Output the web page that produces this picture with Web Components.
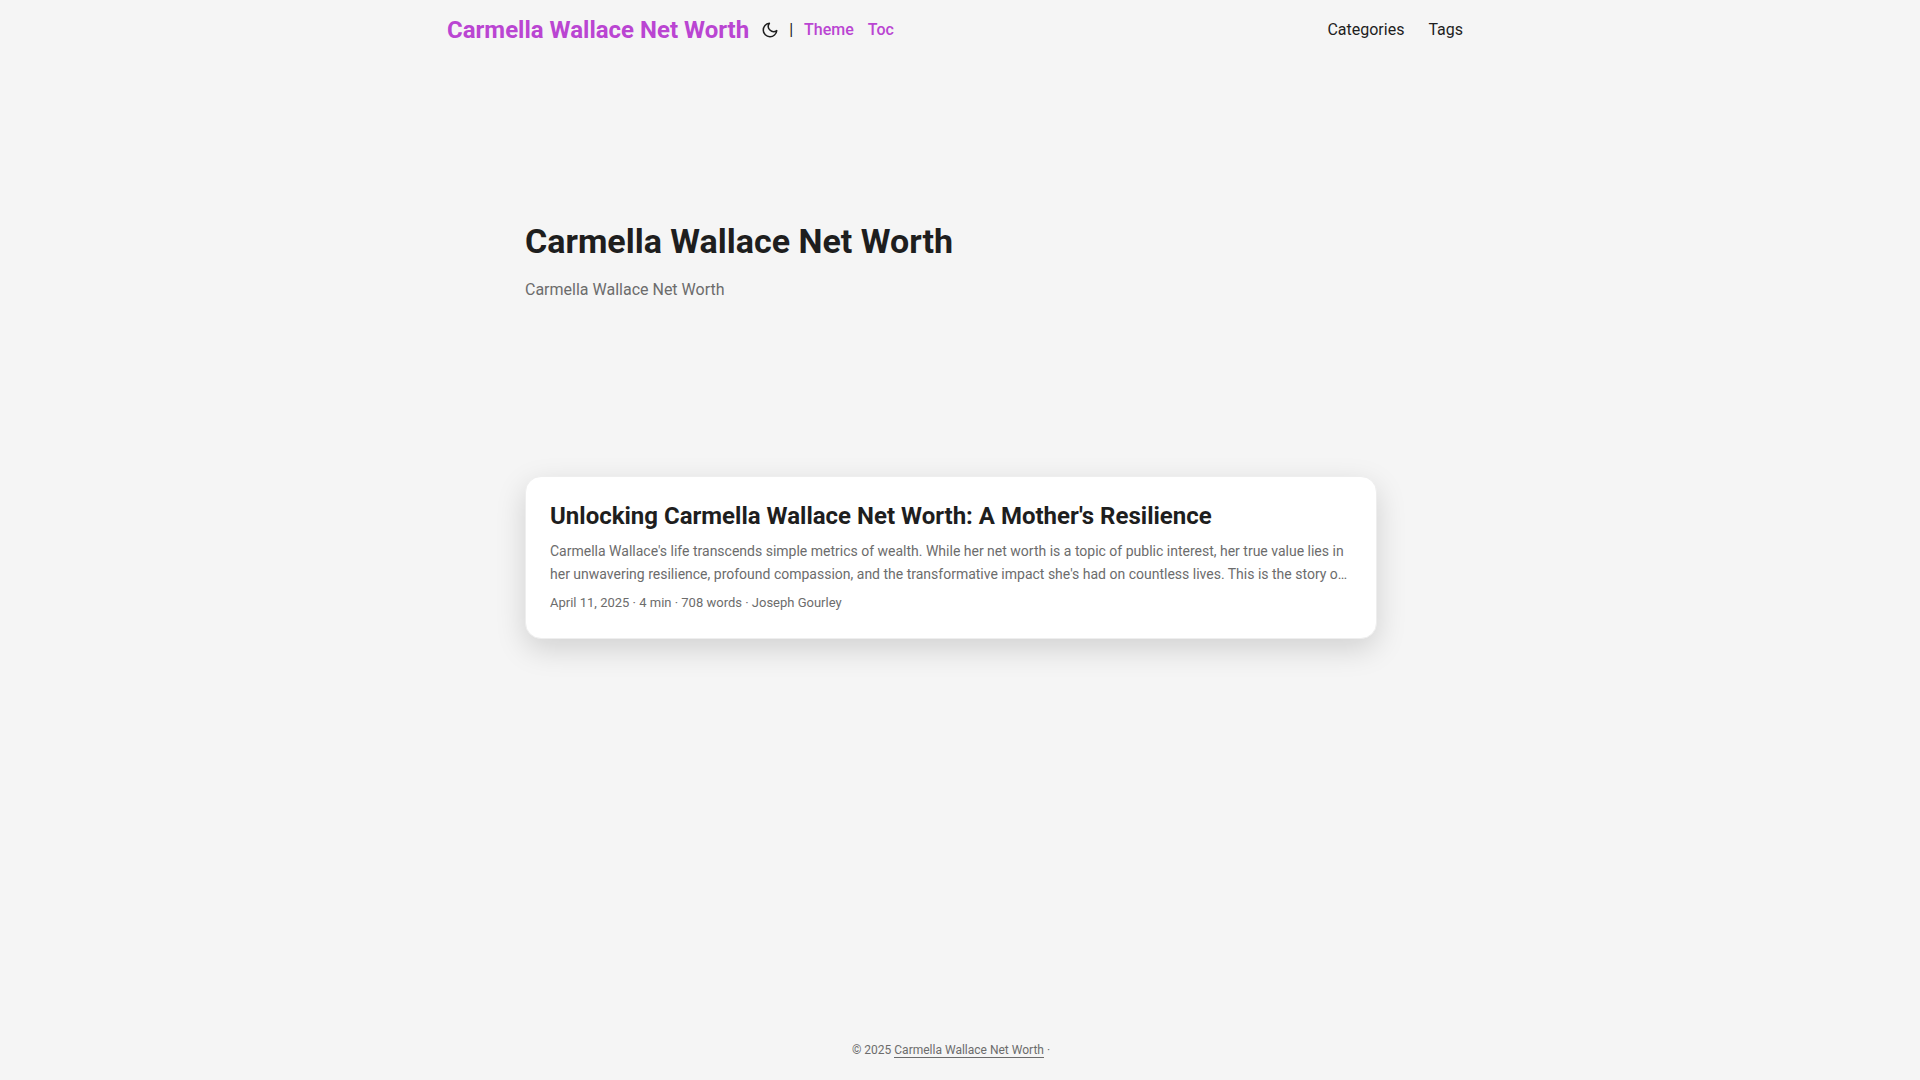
<!DOCTYPE html>
<html lang="en">
<head>
<meta charset="utf-8">
<meta name="viewport" content="width=device-width, initial-scale=1">
<title>Carmella Wallace Net Worth</title>
<style>
:root {
  --theme: #f5f5f5;
  --entry: #fff;
  --primary: #1e1e1e;
  --secondary: #6c6c6c;
  --accent: #ba45d2;
  --border: #eee;
  --gap: 24px;
  --bar: 60px;
}
body {
  margin: 0;
  padding-right: 18px;
  background: var(--theme);
  color: var(--primary);
  font: 16px/26px Roboto, "Liberation Sans", sans-serif;
}
</style>
</head>
<body>
<blog-page>
  <site-header slot="header" name="Carmella Wallace Net Worth">
    <a slot="extra" href="#theme">Theme</a>
    <a slot="extra" href="#toc">Toc</a>
    <a slot="menu" href="#categories">Categories</a>
    <a slot="menu" href="#tags">Tags</a>
  </site-header>
  <home-intro>
    <span slot="title">Carmella Wallace Net Worth</span>
    Carmella Wallace Net Worth
  </home-intro>
  <post-entry href="#post">
    <span slot="title">Unlocking Carmella Wallace Net Worth: A Mother's Resilience</span>
    Carmella Wallace's life transcends simple metrics of wealth. While her net worth is a topic of public interest, her true value lies in her unwavering resilience, profound compassion, and the transformative impact she's had on countless lives. This is the story o…
    <span slot="meta">April 11, 2025 · 4 min · 708 words · Joseph Gourley</span>
  </post-entry>
  <site-footer slot="footer">© 2025 <a href="#home">Carmella Wallace Net Worth</a> ·</site-footer>
</blog-page>

<script>
const define = (name, html, setup) => {
  const template = document.createElement('template');
  template.innerHTML = html;
  customElements.define(name, class extends HTMLElement {
    constructor() {
      super();
      this.attachShadow({ mode: 'open' }).append(template.content.cloneNode(true));
    }
    connectedCallback() { if (setup) setup(this, this.shadowRoot); }
  });
};

define('blog-page', `
<style>
  :host { display: flex; flex-direction: column; min-height: 100vh; }
  main { flex: 1; box-sizing: border-box; width: 100%; max-width: 900px; margin: 0 auto; padding: var(--gap); }
</style>
<slot name="header"></slot>
<main><slot></slot></main>
<slot name="footer"></slot>`);

define('site-header', `
<style>
  :host { display: block; line-height: var(--bar); }
  nav { display: flex; flex-wrap: wrap; justify-content: space-between; box-sizing: border-box; max-width: 1056px; margin: 0 auto; padding: 0 16px 0 var(--gap); }
  .brand, .menu, .extra { display: flex; align-items: center; }
  .logo { color: var(--accent); font-size: 24px; font-weight: 700; text-decoration: none; }
  button { display: flex; margin: 0; padding: 0 10px 0 12px; border: 0; background: none; color: inherit; cursor: pointer; }
  .extra { gap: 14px; padding-left: 11px; font-weight: 500; }
  .menu { gap: var(--gap); }
  ::slotted(a) { color: var(--primary); text-decoration: none; }
  ::slotted(a[slot="extra"]) { color: var(--accent); }
</style>
<nav>
  <div class="brand">
    <a class="logo" href="#home"></a>
    <button type="button" aria-label="Toggle theme">
      <svg width="18" height="18" viewBox="0 0 24 24" fill="none" stroke="currentColor" stroke-width="2" stroke-linecap="round" stroke-linejoin="round"><path d="M21 12.79A9 9 0 1 1 11.21 3 7 7 0 0 0 21 12.79z"/></svg>
    </button>
    <span>|</span>
    <div class="extra"><slot name="extra"></slot></div>
  </div>
  <div class="menu"><slot name="menu"></slot></div>
</nav>`, (host, root) => {
  root.querySelector('.logo').textContent = host.getAttribute('name');
});

define('home-intro', `
<style>
  :host { display: flex; flex-direction: column; justify-content: center; min-height: 320px; margin: 17px 0 55px; }
  h1 { margin: 0; font-size: 34px; line-height: 44px; }
  p { margin: 14px 0 0; color: var(--secondary); }
</style>
<h1><slot name="title"></slot></h1>
<p><slot></slot></p>`);

define('post-entry', `
<style>
  :host { display: block; }
  a { display: block; padding: var(--gap); color: inherit; text-decoration: none; background: var(--entry); border: 1px solid var(--border); border-radius: 16px; box-shadow: 0 10px 30px rgba(0, 0, 0, .15); }
  h2 { margin: 0; font-size: 24px; line-height: 31px; }
  p { margin: 8px 0 6px; color: var(--secondary); font-size: 14px; line-height: 23px; }
  footer { color: var(--secondary); font-size: 13px; line-height: 22px; }
</style>
<a>
  <h2><slot name="title"></slot></h2>
  <p><slot></slot></p>
  <footer><slot name="meta"></slot></footer>
</a>`, (host, root) => {
  root.querySelector('a').href = host.getAttribute('href');
});

define('site-footer', `
<style>
  :host { display: block; box-sizing: border-box; height: var(--bar); padding: 18px var(--gap); color: var(--secondary); font-size: 12px; line-height: 24px; text-align: center; }
  ::slotted(a) { color: inherit; text-decoration: none; border-bottom: 1px solid var(--secondary); }
</style>
<slot></slot>`);
</script>
</body>
</html>
